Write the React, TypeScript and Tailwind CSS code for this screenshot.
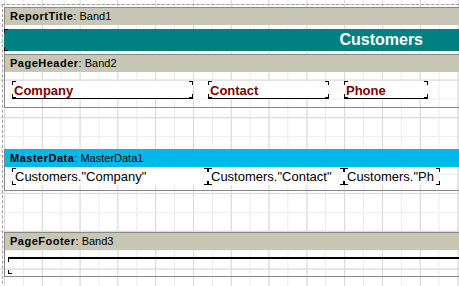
import React from "react";

function Corners({ top = true, bottom = true }: { top?: boolean; bottom?: boolean }) {
  return (
    <>
      {top && <span className="absolute left-0 top-0 w-[4px] h-[4px] border-l border-t border-black" />}
      {top && <span className="absolute right-0 top-0 w-[4px] h-[4px] border-r border-t border-black" />}
      {bottom && <span className="absolute left-0 bottom-0 w-[4px] h-[4px] border-l border-b border-black" />}
      {bottom && <span className="absolute right-0 bottom-0 w-[4px] h-[4px] border-r border-b border-black" />}
    </>
  );
}

function BandHeader({ name, label, color }: { name: string; label: string; color: string }) {
  return (
    <div className={`h-[17px] flex items-center pl-[5px] text-[11px] leading-none text-black ${color}`}>
      <span className="font-bold tracking-[0.5px]">{name}</span>
      <span>: {label}</span>
    </div>
  );
}

export default function App() {
  return (
    <div className="w-[459px] h-[286px] overflow-hidden relative bg-white font-['Liberation_Sans',Arial,sans-serif] bg-[image:linear-gradient(to_right,#d9d9d9_1px,transparent_1px),linear-gradient(to_bottom,#d9d9d9_1px,transparent_1px),linear-gradient(to_right,#ececec_1px,transparent_1px),linear-gradient(to_bottom,#ececec_1px,transparent_1px)] bg-[size:37.8px_37.8px,37.8px_37.8px,18.9px_18.9px,18.9px_18.9px] bg-[position:4px_4px]">
      <div className="ml-[2px] mt-[4px] h-[320px] border-t border-l border-dashed border-[#a0a0a0] pl-[1px] pt-[2px]">
        {/* ReportTitle */}
        <div className="border-l border-t border-[#888]">
          <BandHeader name="ReportTitle" label="Band1" color="bg-[#c8c6b5]" />
          <div className="relative h-[29px]">
            <div className="absolute left-[-1px] top-[4px] right-0 h-[22px] bg-[#008080] flex items-center justify-end pr-[36px]">
              <span className="text-white font-bold text-[16px] leading-none">Customers</span>
              <span className="absolute left-0 top-0 w-[4px] h-[4px] border-l border-t border-black" />
              <span className="absolute left-0 bottom-0 w-[4px] h-[4px] border-l border-b border-black" />
            </div>
          </div>
        </div>

        {/* PageHeader */}
        <div className="border-l border-t border-b border-[#888]">
          <BandHeader name="PageHeader" label="Band2" color="bg-[#c8c6b5]" />
          <div className="relative h-[35px]">
            <div className="absolute left-[7px] top-[9px] w-[181px] h-[18px] bg-white border-b border-black">
              <Corners />
              <div className="pl-[2px] pt-[2px] text-[13px] leading-[15px] font-bold text-[#800000]">Company</div>
            </div>
            <div className="absolute left-[203px] top-[9px] w-[121px] h-[18px] bg-white border-b border-black">
              <Corners />
              <div className="pl-[2px] pt-[2px] text-[13px] leading-[15px] font-bold text-[#800000]">Contact</div>
            </div>
            <div className="absolute left-[339px] top-[9px] w-[84px] h-[18px] bg-white border-b border-black">
              <Corners />
              <div className="pl-[2px] pt-[2px] text-[13px] leading-[15px] font-bold text-[#800000]">Phone</div>
            </div>
          </div>
        </div>

        {/* MasterData */}
        <div className="mt-[41px] border-l border-t border-b border-[#888]">
          <BandHeader name="MasterData" label="MasterData1" color="bg-[#00b9ea]" />
          <div className="relative h-[23px]">
            <div className="absolute left-[7px] top-[1px] w-[196px] h-[17px] bg-white overflow-hidden">
              <Corners />
              <div className="pl-[3px] pt-[1px] text-[13px] leading-[15px] text-black whitespace-nowrap">Customers."Company"</div>
            </div>
            <div className="absolute left-[203px] top-[1px] w-[136px] h-[17px] bg-white overflow-hidden">
              <Corners />
              <div className="pl-[3px] pt-[1px] text-[13px] leading-[15px] text-black whitespace-nowrap">Customers."Contact"</div>
            </div>
            <div className="absolute left-[339px] top-[1px] w-[96px] h-[17px] bg-white">
              <Corners />
              <div className="ml-[3px] mr-[2px] mt-[1px] h-[15px] overflow-hidden text-[13px] leading-[15px] text-black break-all">Customers."Phone"</div>
            </div>
          </div>
        </div>

        {/* PageFooter */}
        <div className="mt-[41px] border-l border-t border-b border-[#888]">
          <BandHeader name="PageFooter" label="Band3" color="bg-[#c8c6b5]" />
          <div className="relative h-[26px]">
            <div className="absolute left-[3px] top-[7px] right-[-20px] h-[17px] border-t-2 border-black">
              <span className="absolute left-0 top-0 w-[4px] h-[3px] border-l border-black" />
              <span className="absolute left-0 bottom-0 w-[4px] h-[4px] border-l border-b border-black" />
            </div>
          </div>
        </div>
      </div>
    </div>
  );
}
